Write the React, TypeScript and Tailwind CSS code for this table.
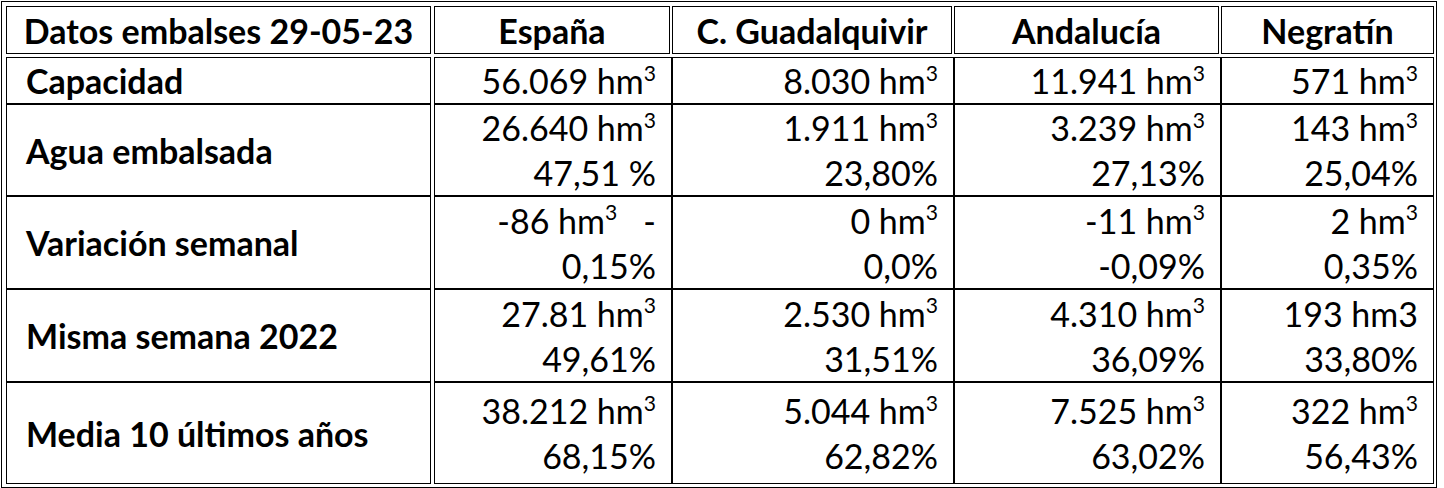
import type { ReactNode } from "react";

const Hm = ({ n }: { n: string }) => (
  <>
    {n} hm<sup className="text-[0.62em] -top-[0.62em]">3</sup>
  </>
);

const headers = ["España", "C. Guadalquivir", "Andalucía", "Negratín"];

const rows: { label: string; h: string; cells: ReactNode[][] }[] = [
  {
    label: "Capacidad",
    h: "h-[47px]",
    cells: [
      [<Hm n="56.069" />],
      [<Hm n="8.030" />],
      [<Hm n="11.941" />],
      [<Hm n="571" />],
    ],
  },
  {
    label: "Agua embalsada",
    h: "h-[92px]",
    cells: [
      [<Hm n="26.640" />, "47,51 %"],
      [<Hm n="1.911" />, "23,80%"],
      [<Hm n="3.239" />, "27,13%"],
      [<Hm n="143" />, "25,04%"],
    ],
  },
  {
    label: "Variación semanal",
    h: "h-[93px]",
    cells: [
      [
        <>
          <Hm n="-86" />
          {"   -"}
        </>,
        "0,15%",
      ],
      [<Hm n="0" />, "0,0%"],
      [<Hm n="-11" />, "-0,09%"],
      [<Hm n="2" />, "0,35%"],
    ],
  },
  {
    label: "Misma semana 2022",
    h: "h-[93px]",
    cells: [
      [<Hm n="27.81" />, "49,61%"],
      [<Hm n="2.530" />, "31,51%"],
      [<Hm n="4.310" />, "36,09%"],
      ["193 hm3", "33,80%"],
    ],
  },
  {
    label: "Media 10 últimos años",
    h: "flex-1",
    cells: [
      [<Hm n="38.212" />, "68,15%"],
      [<Hm n="5.044" />, "62,82%"],
      [<Hm n="7.525" />, "63,02%"],
      [<Hm n="322" />, "56,43%"],
    ],
  },
];

const colW = ["w-[238px]", "w-[282px]", "w-[267px]", "flex-1"];

export default function App() {
  return (
    <div className="w-[1444px] h-[488px] bg-white pl-px pt-px text-black font-['Lato',sans-serif] text-[34px] leading-[45px]">
      <div className="w-[1436px] h-[487px] border border-black pl-[4px] pt-[4px] pr-[2px] pb-[3px] flex flex-col">
        {/* header */}
        <div className="flex h-[48px] font-bold">
          <div className="w-[425px] border border-black flex items-center justify-center">
            Datos embalses 29-05-23
          </div>
          <div className="ml-[3px] w-[236px] border border-black flex items-center justify-center">
            {headers[0]}
          </div>
          <div className="ml-[2px] w-[280px] border border-black flex items-center justify-center">
            {headers[1]}
          </div>
          <div className="ml-[2px] w-[265px] border border-black flex items-center justify-center">
            {headers[2]}
          </div>
          <div className="ml-[2px] flex-1 border border-black flex items-center justify-center">
            {headers[3]}
          </div>
        </div>

        {/* body */}
        <div className="flex flex-1 mt-[3px]">
          <div className="w-[425px] border border-black flex flex-col font-bold">
            {rows.map((r, i) => (
              <div
                key={r.label}
                className={`${r.h} flex items-center pl-[19px] ${i < rows.length - 1 ? "border-b-2 border-black" : ""}`}
              >
                {r.label}
              </div>
            ))}
          </div>
          <div className="ml-[3px] flex-1 border border-black flex flex-col">
            {rows.map((r, i) => (
              <div
                key={r.label}
                className={`${r.h} flex ${i < rows.length - 1 ? "border-b-2 border-black" : ""}`}
              >
                {r.cells.map((lines, j) => (
                  <div
                    key={j}
                    className={`${colW[j]} flex flex-col items-end justify-center pr-[15px] ${j < 3 ? "border-r-2 border-black" : ""}`}
                  >
                    {lines.map((l, k) => (
                      <div key={k} className="whitespace-pre">
                        {l}
                      </div>
                    ))}
                  </div>
                ))}
              </div>
            ))}
          </div>
        </div>
      </div>
    </div>
  );
}
